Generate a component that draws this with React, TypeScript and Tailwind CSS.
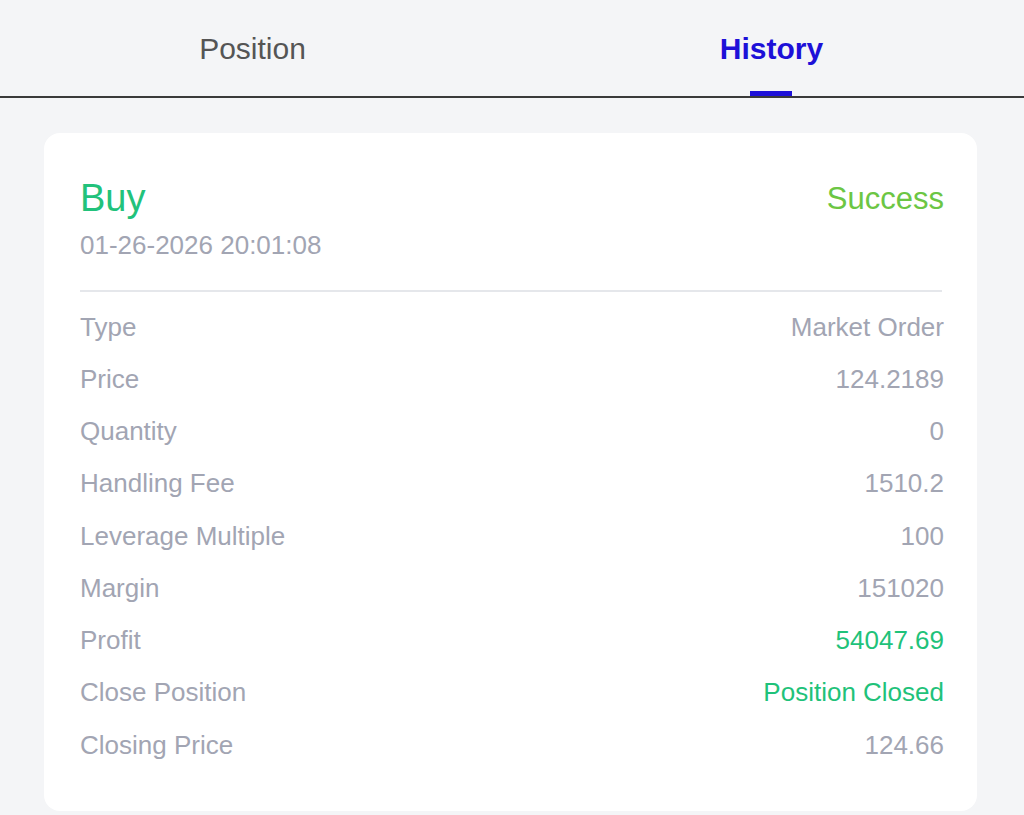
const rows: { label: string; value: string; tone?: "green" }[] = [
  { label: "Type", value: "Market Order" },
  { label: "Price", value: "124.2189" },
  { label: "Quantity", value: "0" },
  { label: "Handling Fee", value: "1510.2" },
  { label: "Leverage Multiple", value: "100" },
  { label: "Margin", value: "151020" },
  { label: "Profit", value: "54047.69", tone: "green" },
  { label: "Close Position", value: "Position Closed", tone: "green" },
  { label: "Closing Price", value: "124.66" },
];

export default function App() {
  return (
    <div
      className="min-h-screen bg-[#f4f5f7]"
      style={{ fontFamily: '"Liberation Sans", Arial, sans-serif' }}
    >
      {/* tabs */}
      <div className="flex h-[98px] border-b-2 border-[#3a3a3a]">
        <div className="flex-1 flex justify-center pr-[10px]">
          <div className="relative flex items-center h-full text-[30px] text-[#555555]">Position</div>
        </div>
        <div className="flex-1 flex justify-center pl-[4px]">
          <div className="relative flex items-center h-full text-[30px] font-bold text-[#1d10d8]">
            History
            <span className="absolute left-1/2 -translate-x-1/2 bottom-0 w-[42px] h-[5px] bg-[#1d10d8]" />
          </div>
        </div>
      </div>

      <div className="pl-[44px] pr-[47px] pt-[35px]">
        <div className="bg-white rounded-[16px] pl-[36px] pr-[33px] pt-[45px] pb-[40px]">
          <div className="flex justify-between items-start">
            <div>
              <div className="text-[38px] leading-[40px] text-[#22c27b]">Buy</div>
              <div className="mt-[12px] text-[26px] leading-[30px] text-[#a2a5b3]">01-26-2026 20:01:08</div>
            </div>
            <div className="text-[31px] leading-[42px] text-[#6cc644]">Success</div>
          </div>
          <div className="mt-[30px] h-[2px] bg-[#e5e7eb] mr-[2px]" />
          <div className="mt-[9px]">
            {rows.map((r) => (
              <div key={r.label} className="flex justify-between items-center h-[52.25px] text-[26px]">
                <span className="text-[#a2a5b3]">{r.label}</span>
                <span className={r.tone === "green" ? "text-[#1fc27a]" : "text-[#a2a5b3]"}>{r.value}</span>
              </div>
            ))}
          </div>
        </div>
      </div>
    </div>
  );
}
